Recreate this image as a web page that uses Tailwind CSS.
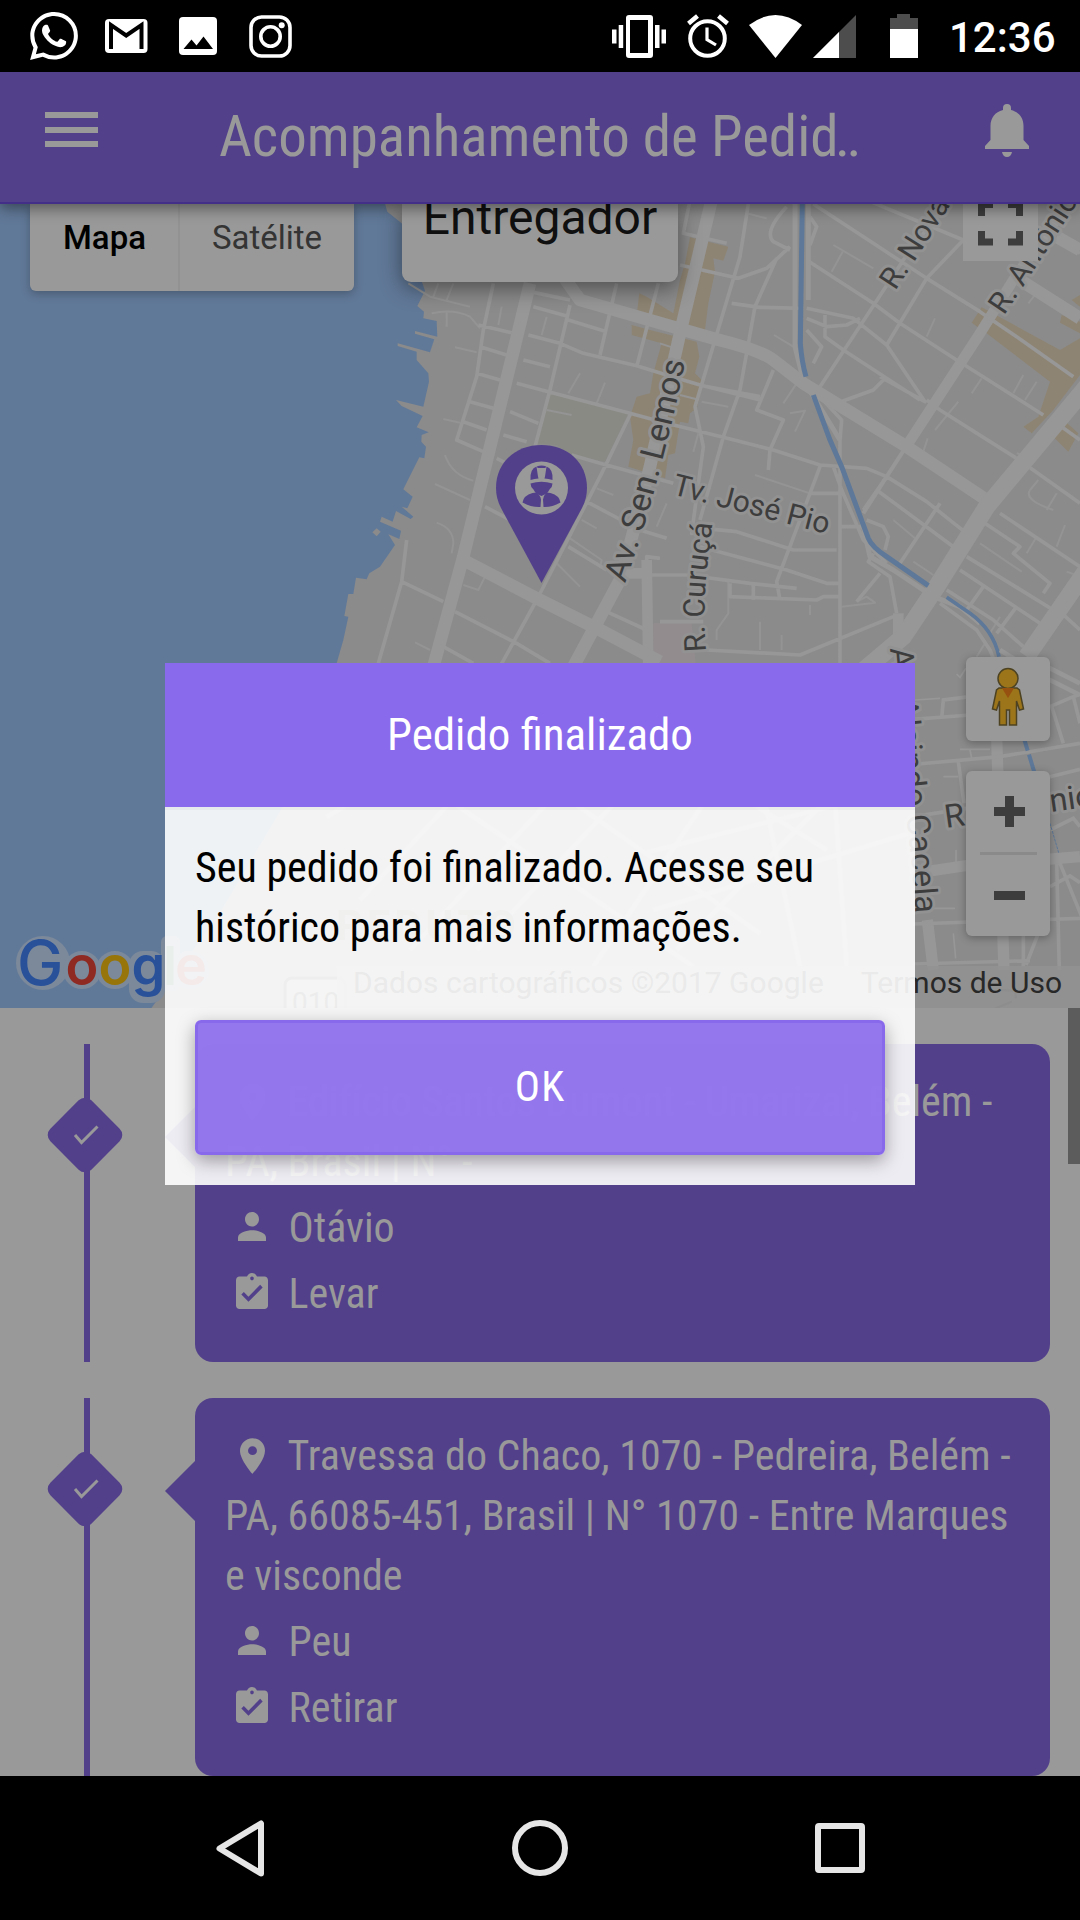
<!DOCTYPE html>
<html lang="pt-BR">
<head>
<meta charset="utf-8">
<title>Acompanhamento de Pedidos</title>
<script src="https://cdn.jsdelivr.net/npm/@tailwindcss/browser@4"></script>
</head>
<body class="bg-black">
<div class="relative flex h-[1920px] w-[1080px] flex-col overflow-hidden bg-black font-['Roboto',sans-serif]">

  <!-- Status bar -->
  <div class="flex h-[72px] shrink-0 items-center bg-black text-white">
    <svg class="ml-[30px] h-[48px] w-[48px]" viewBox="0 0 24 24" fill="currentColor"><path d="M17.472 14.382c-.297-.149-1.758-.867-2.03-.967-.273-.099-.471-.148-.67.15-.197.297-.767.966-.94 1.164-.173.199-.347.223-.644.075-.297-.15-1.255-.463-2.39-1.475-.883-.788-1.48-1.761-1.653-2.059-.173-.297-.018-.458.13-.606.134-.133.298-.347.446-.52.149-.174.198-.298.298-.497.099-.198.05-.371-.025-.52-.075-.149-.669-1.612-.916-2.207-.242-.579-.487-.5-.669-.51-.173-.008-.371-.01-.57-.01-.198 0-.52.074-.792.372-.272.297-1.04 1.016-1.04 2.479 0 1.462 1.065 2.875 1.213 3.074.149.198 2.096 3.2 5.077 4.487.709.306 1.262.489 1.694.625.712.227 1.36.195 1.871.118.571-.085 1.758-.719 2.006-1.413.248-.694.248-1.289.173-1.413-.074-.124-.272-.198-.57-.347m-5.421 7.403h-.004a9.87 9.87 0 01-5.031-1.378l-.361-.214-3.741.982.998-3.648-.235-.374a9.86 9.86 0 01-1.51-5.26c.001-5.45 4.436-9.884 9.888-9.884 2.64 0 5.122 1.03 6.988 2.898a9.825 9.825 0 012.893 6.994c-.003 5.45-4.437 9.884-9.885 9.884m8.413-18.297A11.815 11.815 0 0012.05 0C5.495 0 .16 5.335.157 11.892c0 2.096.547 4.142 1.588 5.945L.057 24l6.305-1.654a11.882 11.882 0 005.683 1.448h.005c6.554 0 11.89-5.335 11.893-11.893a11.821 11.821 0 00-3.48-8.413z"/></svg>
    <svg class="ml-[27px] h-[34px] w-[43px]" viewBox="0 0 43 34"><rect width="42.5" height="34" rx="4" fill="#fff"/><path d="M6 30V6l15.200 10.500L36.500 6v24" fill="none" stroke="#000" stroke-width="4"/></svg>
    <svg class="ml-[31px] h-[38px] w-[38px]" viewBox="0 0 38 38"><rect width="38" height="38" rx="4" fill="#fff"/><path d="M4.500 32l8-9.500 5 6 7-9L34 32z" fill="#000"/></svg>
    <svg class="ml-[31.500px] h-[43px] w-[43px]" viewBox="0 0 43 43" fill="none" stroke="#fff"><rect x="2" y="2" width="39" height="39" rx="10.500" stroke-width="3.600"/><circle cx="21.500" cy="21.500" r="9.700" stroke-width="3.600"/><circle cx="32.700" cy="10.300" r="3" fill="#fff" stroke="none"/></svg>
    <svg class="ml-auto h-[43px] w-[54px]" viewBox="0 0 54 43" fill="#fff"><path fill-rule="evenodd" d="M17 0h21q3 0 3 3v37q0 3-3 3H17q-3 0-3-3V3q0-3 3-3zm1 5v33h18V5z"/><path d="M0 14.500h4.500v14H0zM6.700 10h4.500v23H6.700zM43 10h4.500v23H43zM49.500 14.500H54v14h-4.500z"/></svg>
    <svg class="ml-[21px] h-[44px] w-[42px]" viewBox="0 0 42 44" fill="none" stroke="#fff"><circle cx="20.500" cy="24.500" r="17.300" stroke-width="4"/><path d="M20 13.500v12l9 5.500" stroke-width="3.200"/><path d="M1.500 9.500l9-7.500M40.500 9.500l-9-7.500" stroke-width="4.500"/></svg>
    <svg class="ml-[20px] h-[43px] w-[53px]" viewBox="0 0 53 43" fill="#fff"><path d="M0 10Q26.500-10 53 10L26.500 43z"/></svg>
    <svg class="ml-[11px] h-[43px] w-[43px]" viewBox="0 0 43 43"><path d="M43 0v43H0z" fill="#4d4d4d"/><path d="M26 17v26H0z" fill="#fff"/></svg>
    <svg class="ml-[34px] h-[44px] w-[28px]" viewBox="0 0 28 44"><path d="M0 4h7V0h13v4h8v11H0z" fill="#4d4d4d"/><path d="M0 15h28v29H0z" fill="#fff"/></svg>
    <span class="mr-[24px] ml-[31px] w-[107px] pt-[3px] text-[42px] leading-[74px] font-medium whitespace-nowrap">12:36</span>
  </div>

  <!-- App bar -->
  <header class="relative z-10 flex h-[132px] shrink-0 border-b-2 border-[#432f88] bg-[#53408b] text-[#999] shadow-[0_4px_14px_rgba(0,0,0,0.45)]">
    <svg class="mt-[40px] ml-[44.5px] h-[35px] w-[53px]" viewBox="0 0 53 35" fill="currentColor"><path d="M0 0h53v6H0zM0 15h53v6H0zM0 29h53v6H0z"/></svg>
    <h1 class="ml-[121.5px] flex h-[130px] w-[700px] items-center text-[57px] font-stretch-condensed whitespace-nowrap"><span>Acompanhamento de Pedi<span class="tracking-[-3.500px]">d..</span></span></h1>
    <svg class="mt-[32px] ml-[66px] h-[53px] w-[44px]" viewBox="0 0 44 53" fill="currentColor"><path d="M17 48h10q-1 5-5 5t-5-5zM0 45v-3l5.500-6V22C5.500 14 10 8 18 6V4q0-4 4-4t4 4v2c8 2 12.500 8 12.500 16v14l5.500 6v3z"/></svg>
  </header>

  <!-- Map -->
  <section class="relative h-[804px] shrink-0 overflow-hidden bg-[#617998]">
    <svg class="absolute inset-0 h-full w-full" viewBox="0 204 1080 804">
      <defs>
        <path id="lemos" d="M975 1150Q1035 985 1090 770T1166 420"/>
        <path id="curuca" d="M138 1355Q128 1230 140 1120T162 930"/>
        <path id="nova" d="M706 273L760 190L900 -30"/>
        <path id="antonio" d="M1032 347L1100 245L1290 -50"/>
        <path id="cacela" d="M890 648Q901 770 908 830T917 950"/>
      </defs>
      <g transform="translate(300 200) scale(.33333)">
        <path fill="#8b8b8b" d="M252 0L262 35L305 70L340 160L366 246L375 272L352 318L372 335L370 355L410 363L412 410L345 393L345 401L403 418L390 457L293 430L293 438L350 455L350 480L385 520L387 545L370 620L288 600L305 618L368 648L350 682L386 697L365 705L364 725L378 740L373 775L358 772L310 868L338 890L322 925L305 920L340 950L332 957L288 933L278 965L245 950L240 965L303 992L298 1017L265 1003L285 1035L240 1100L208 1120L200 1138L168 1133L160 1182L145 1182L133 1248L145 1250L130 1320L110 1390L-57 1830L-240 2139L-450 2430H2400V0z"/>
        <path fill="#8b8b8b" d="M217 997l13-12 12 10-12 14z"/>
        <path fill="#898a84" d="M745 580L985 640L915 785L820 765L770 735L712 730z"/>
        <path fill="#938c8f" d="M1060 1270H1175L1188 1400H1060z"/>
      </g>
      <g transform="translate(660 200) scale(.33333)">
        <path fill="#8e8473" d="M90 112L205 140L190 182L160 175L165 215L145 310L135 390L-70 345L-62 280L-40 290L40 340L60 240L75 190zM-85 375L-30 390L110 425L118 470L105 520L130 545L110 625L90 640L85 670L60 665L45 760L25 765L15 835L-95 800L-80 720L-90 650L-70 590L-30 580L-20 520L5 430L-85 405zM965 322L1200 450L1260 415V525L1180 630L1115 700L1090 680L1135 650L1170 545L980 400L935 368zM1205 345L1260 365V400L1200 368zM1235 300L1260 285V320zM1205 655L1255 700L1225 755L1180 710z"/>
        <g fill="none" stroke="#979797" stroke-linejoin="round">
          <!-- minor streets -->
          <g stroke-width="6" stroke="#949494">
            <path d="M-755 250L-690 290L-570 320M-665 250L-680 290M-620 250L-640 300M-685 340Q-620 325-570 350L-540 385M-640 335V380M-615 442L-550 457M-650 657L-600 668M-645 765Q-625 825-560 842M-675 852L-570 900M-670 968Q-620 985-620 1030L-625 1060M-590 1155L-545 1170L-520 1120M-735 1327L-690 1350M-340 630L-265 645M-275 580L-240 520M-190 610L-165 548M-355 405L-340 350M-485 375L-475 320M-190 865L-140 885M-270 1015L-175 1080L-180 1105M-235 960L-190 985M-240 1160L-310 1090M-10 980L20 910M0 430L45 445M60 585L110 598M125 605L205 620M100 755L115 700M285 825L450 880M260 40L320 55M342 405L400 440M370 610L410 550L435 525M405 695L435 632L390 640M520 135L640 205M548 155L515 215M800 410L825 355M935 580L965 535M1060 580L1090 525M1095 600L1130 545M825 690L895 605M790 755L803 715M1180 930Q1090 900 1110 870L1135 840M1160 930L1190 880M700 960L765 1015M760 1085L820 1125M1100 1060L1130 1010M1190 1040L1215 975M960 1030L1085 1115M300 1350V1265M365 1350V1305M170 1320V1290L205 1240V1140M450 1245V1215M545 1220L645 1208L620 1190L590 1205M1070 760L1090 765M950 1370L975 1330M1220 1115L1260 1130M1020 1250L990 1300M1105 310L1125 285"/>
          </g>
          <!-- local streets -->
          <g stroke-width="11">
            <path d="M-500 250L-530 390L-550 530L-610 720L-530 755M-760 1020L-775 1145L-845 1390M-775 1145L-650 1205M-545 375L-445 398M-540 440L-460 465M-550 520L-480 540M-570 605L-500 625M-590 665L-520 690M-390 275L-270 300M-380 320L-280 348M-395 405L-300 430L-230 460L-70 497L20 525L120 555L220 580L300 600M-410 480L-330 500M-430 550L-335 575L-90 640L20 670L190 712L340 750L480 795L620 805L680 830M-270 315L-330 570L-375 740M-275 360L-160 395M-130 250L-180 465M-5 250L-70 500M-450 635L-365 670M-470 705L-400 725M-490 775L-440 800M-265 765L-180 790L40 850M-90 645L-175 820L-370 1200L-480 1400M-525 920L-430 970M-220 905L-60 990L20 1015M-275 1040L-160 1110M-615 1235L-430 1330L-330 1390M-650 1340L-560 1390M-160 1235L-40 1290M265 12L240 170L165 420L105 620L130 740L95 1000L160 990M90 0L70 100L200 130M60 195L235 235L320 205L390 140M215 310L300 322L430 325M350 175L285 320L240 570L190 710L120 960M140 560L300 590M340 510L290 630L370 660L330 750L325 810M380 20Q310 95 340 125L390 150M450 50L470 80L450 135M440 180L640 310L720 370L890 480L1150 645M440 325L580 355L680 435L795 605L660 530M440 355L500 380L560 375L600 355M440 390L485 440L460 490M495 345V410L550 450L780 600M480 560L645 310L730 180L840 35M680 435L800 235L910 120M460 12L640 130L800 235L960 335L1070 410L1240 530M620 0L910 120M530 610L640 570L670 540M800 600L840 630L1070 775L1260 910M480 590L545 660L540 720V1400M480 800L450 880L350 1145L360 1200M450 880H540M130 985L230 995L400 1050H530M120 1040L380 1110L500 1150H540M0 1075L-40 1070L-40 1110M-40 1125H80L270 1150L410 1165M210 1150V1190L470 1200L490 1190H540M280 1150V1200M0 1265L130 1265M140 1350L420 1365L700 1250M540 980H610M520 800L545 870L610 1020L680 1090M610 930L680 830L800 905L920 1000M650 870L880 1040M620 960L670 980L685 1010L675 1050M840 910L720 1090M640 1060L625 1085L690 1130L710 1240M660 1120L590 1205M1020 940L1260 1100M960 960L1080 1040L1060 1060L1170 1150L1150 1180M920 1070L1180 1230M900 1110L1140 1270M840 1210L950 1290L990 1350L1010 1400M860 1170L1000 1260L1090 1340M970 1160L920 1230M1070 1220L1010 1300M1200 120L1260 160M1190 670L1260 720M1200 1235L1260 1290"/>
          </g>
          <path stroke-width="15" d="M405 0V440L430 540L540 720M445 0V300M605 960L630 1070L700 1110L820 1190L900 1220L960 1270"/>
          <!-- avenues -->
          <path stroke-width="32" d="M1250 -30L1060 240L960 400L735 745M-40 1080L-35 1400M-105 1120L-40 1120M620 1390L720 1330M715 1240V1330"/>
          <path stroke-width="12" d="M735 745L680 830L610 940"/>
          <path stroke-width="38" d="M-390 250L-590 1070L-680 1400M155 0L60 400L-30 800L-115 1130L-260 1400M-590 1080L-380 1190L-180 1290L0 1385M-290 230L-240 300L170 418Q300 450 340 480L430 550L740 740L980 900M1190 110L1260 150M1080 240L1260 355"/>
          <path stroke-width="52" d="M1280 560L980 920L830 1160L730 1310L600 1420M1280 1110L1100 1370"/>
          <!-- streets under the dialog -->
          <g stroke-width="14">
            <path d="M-1000 1850L-400 1500M-900 2100L-300 1450M-750 2250L-50 1500M-550 2250L200 1450M-1000 1550L100 2300M-700 1500L300 2200M-350 1420L500 1950M0 1420L600 1800M-200 2300L300 1560M50 2250L700 1600M-50 1960L750 1760M-20 2130L750 1900M250 1500L420 2300M500 1450L560 2300"/>
          </g>
        </g>
        <g fill="none" stroke="#5d7899" stroke-width="15">
          <path d="M427 0L421 430Q425 485 438 530M460 585L510 720L545 800L625 1015Q635 1040 680 1070L805 1157"/>
          <path stroke-width="11" d="M860 1192L930 1240Q1000 1290 1017 1370"/>
        </g>
      </g>
      <!-- streets around the lower right controls -->
      <g transform="translate(900 600) scale(.33333)" fill="none" stroke="#979797">
        <path stroke-width="34" d="M290 410L312 1110M82 960L100 1110M30 822L210 795M440 778L540 770"/>
        <path stroke-width="14" d="M300 150L420 225L540 285M440 200L540 250"/>
        <path stroke-width="11" d="M20 495L300 470L540 430M40 358L210 345M125 355L130 300L210 290M450 320L520 290L540 283M455 320L490 430M520 290L540 370M175 485L192 610M450 530L540 508M40 972L540 955M40 1092L390 1082M370 1000V1100M415 1000L378 1095M450 860L510 828L540 848M480 790L545 950M470 790L478 1110M40 650L200 625M450 690L520 655L540 680"/>
        <path stroke-width="5" d="M210 450L215 475M180 448H270M130 530H175M160 1000L167 1075M168 750V790M170 222L180 232L198 205M60 925H165M45 300L120 295"/>
        <path stroke="#5d7899" stroke-width="12" d="M372 415L383 452M387 464L404 520"/>
        <path stroke="#5d7899" stroke-width="3" stroke-dasharray="9 3" d="M450 670L476 758"/>
        <path stroke="#777" stroke-width="6" d="M280 1228L335 1205M300 1170L345 1172L348 1195M345 1145V1165"/>
      </g>

      <!-- labels -->
      <g fill="#3d3d3d" stroke="#929292" stroke-width="18" stroke-linejoin="round" paint-order="stroke" font-family="Roboto, sans-serif" font-size="90">
        <g transform="translate(300 200) scale(.33333)"><text font-size="99"><textPath href="#lemos" textLength="690" lengthAdjust="spacingAndGlyphs">Av. Sen. Lemos</textPath></text></g>
        <g transform="translate(660 200) scale(.33333)">
          <text transform="translate(34 882) rotate(14.400)" textLength="482" lengthAdjust="spacingAndGlyphs">Tv. José Pio</text>
          <text><textPath href="#curuca">R. Curuçá</textPath></text>
          <text><textPath href="#nova">R. Nova</textPath></text>
          <text><textPath href="#antonio">R. Antônio</textPath></text>
        </g>
      </g>
      <g fill="#3d3d3d" stroke="#929292" stroke-width="6" stroke-linejoin="round" paint-order="stroke" font-family="Roboto, sans-serif" font-size="32.500">
        <text><textPath href="#cacela">Av. Alcindo Cacela</textPath></text>
        <text transform="translate(946 828) rotate(-8)">R.</text>
        <text transform="translate(1051 812) rotate(-8)">nio</text>
      </g>
      <g fill="#6b665c" font-family="Roboto, sans-serif" font-weight="700" font-size="42">
        <text x="613" y="771" textLength="236">UMARIZAL</text>
        <text x="336" y="940" textLength="180">REDUTO</text>
      </g>
      <rect x="285" y="978" width="60" height="50" rx="7" fill="#999" stroke="#555" stroke-width="3"/>
      <text x="292" y="1012" font-family="Roboto, sans-serif" font-size="28" fill="#444">010</text>

      <!-- courier pin -->
      <path fill="#53408b" d="M541.500 583L501 508C497.500 501 496 495 496 488C496 462 516 445 541.500 445S587 462 587 488C587 495 585.500 501 582 508z"/>
      <circle cx="541.500" cy="488" r="26.500" fill="#999"/>
      <g fill="#53408b">
        <path d="M530.500 480q-.8-11 6-13.500l1.500 10 .5 2q-4 0-8 1.500zM552.500 480q.8-11-6-13.500l-1.500 10-.5 2q4 0 8 1.500zM537 466.300q4.500-1.600 9 0l-.5 1.700h-8z"/>
        <path d="M530.500 483.500q11-3.500 22 0 0 3.500-3 6-2 4.500-8 6.500-6-2-8-6.500-3-2.500-3-6z"/>
        <path d="M522.500 502.500q1-7 10-9.500l4-.5q4 3 4.500 7l-.5 7.500q-9 .5-18-4.500zM560.500 502.500q-1-7-10-9.500l-4-.5q-3 3-3.500 7l.5 7.500q8 .5 17-4.500z"/>
      </g>
    </svg>

    <!-- attribution -->
    <div class="absolute right-0 bottom-0 flex h-[42px] items-center gap-[37px] bg-[#929292]/80 pr-[18px] pb-[9px] pl-[16px] text-[30px] whitespace-nowrap text-[#282828]">
      <span>Dados cartográficos ©2017 Google</span>
      <span>Termos de Uso</span>
    </div>
    <svg class="absolute bottom-0 left-0 h-[90px] w-[220px]" viewBox="0 918 220 90" font-family="Inter, sans-serif" font-size="54" font-weight="600">
      <g fill="#7b899b" stroke="#7b899b" stroke-width="12" stroke-linejoin="round" aria-hidden="true"><circle cx="43" cy="963" r="21"/><circle cx="82" cy="970" r="13"/><circle cx="115" cy="970" r="13"/><rect x="135" y="957" width="24" height="40" rx="8"/><rect x="167" y="942" width="7" height="43"/><circle cx="190" cy="970" r="13"/></g>
      <text y="985"><tspan x="17" font-size="62" font-weight="500" fill="#28519a">G</tspan><tspan x="65.500" fill="#8f2a22">o</tspan><tspan x="98.500" fill="#97750a">o</tspan><tspan x="131.500" fill="#28519a">g</tspan><tspan x="163" fill="#1f6635">l</tspan><tspan x="175" fill="#8f2a22">e</tspan></text>
    </svg>

    <!-- map type switch -->
    <div class="absolute top-0 left-[30px] flex h-[87px] w-[324px] rounded-b-[6px] bg-[#999] text-[33px] shadow-[0_3px_10px_rgba(0,0,0,0.25)]">
      <div class="flex w-[150px] items-center justify-center border-r-2 border-[#929292] pb-[20px] pl-[1px] font-medium text-black">Mapa</div>
      <div class="flex flex-1 items-center justify-center pb-[20px] text-[#343434]">Satélite</div>
    </div>
    <div class="absolute top-0 left-[402px] flex h-[78px] w-[276px] items-center justify-center rounded-b-[9px] bg-[#999] pb-[51px] text-[48px] text-[#101010] shadow-[0_6px_22px_rgba(0,0,0,0.45)]">Entregador</div>
    <svg class="absolute top-0 left-[963px] h-[57px] w-[75px] bg-[#999]" viewBox="963 204 75 57" fill="none" stroke="#3d3d3d" stroke-width="7"><path d="M981.500 216v-11.500h11.500M1008 204.500h11.500V216M981.500 231v11h11.500M1008 242h11.500v-11"/></svg>
    <div class="absolute top-[453px] left-[966px] flex h-[84px] w-[84px] items-center justify-center rounded-[6px] bg-[#999] shadow-[0_2px_8px_rgba(0,0,0,0.3)]">
      <svg class="-mt-[4px] h-[60px] w-[34px]" viewBox="0 0 34 60" stroke="#4d4322" stroke-width="1.500" fill="#9c7419"><path d="M8 21h18l2.500 2 4 19-4 1-3-9v24h-7V43h-3v15h-7V34l-3 9-4-1 4-19z"/><circle cx="17" cy="11.500" r="10"/><path d="M11 21h12l-6 10z" fill="#96500f" stroke="none"/></svg>
    </div>
    <div class="absolute top-[567px] left-[966px] flex h-[165px] w-[84px] flex-col items-center rounded-[6px] bg-[#999] shadow-[0_2px_8px_rgba(0,0,0,0.3)]">
      <svg class="mt-[25px] ml-[2px] h-[31px] w-[31px]" viewBox="0 0 31 31" fill="#3d3d3d"><path d="M11 0h9v11h11v9H20v11h-9V20H0v-9h11z"/></svg>
      <div class="mt-[25px] h-[3px] w-[57px] bg-[#8a8a8a]"></div>
      <div class="mt-[36px] ml-[2px] h-[9px] w-[31px] bg-[#3d3d3d]"></div>
    </div>
  </section>

  <!-- Delivery timeline -->
  <main class="relative flex h-[768px] shrink-0 flex-col gap-[36px] overflow-hidden bg-[#999] pt-[36px] text-[42px] font-stretch-condensed text-[#999]">
    <div class="flex h-[318px] shrink-0">
      <div class="relative ml-[84px] w-[6px] bg-[#53408b]">
        <div class="absolute top-[62px] -left-[28px] size-[58px] rotate-45 rounded-[9px] bg-[#53408b]"></div>
        <svg class="absolute top-[80px] -left-[11px] h-[22px] w-[26px]" viewBox="0 0 26 22" fill="none" stroke="#999" stroke-width="3"><path d="M2 11l6.500 7.500L24.500 2.500"/></svg>
      </div>
      <svg class="mt-[63px] ml-[75px] h-[60px] w-[30px]" viewBox="0 0 30 60" fill="#53408b"><path d="M30 0v60L0 30z"/></svg>
      <div class="w-[855px] rounded-[18px] bg-[#53408b] px-[30px] pt-[28px] whitespace-nowrap">
        <p class="leading-[60px]"><span class="inline-block w-[62.500px] pl-[14.500px] align-middle"><svg class="mb-[6px] h-[36px] w-[25px]" viewBox="5 2 14 20" fill="currentColor"><path d="M12 2C8.130 2 5 5.130 5 9c0 5.250 7 13 7 13s7-7.750 7-13c0-3.870-3.130-7-7-7zm0 9.500a2.500 2.500 0 110-5 2.500 2.500 0 010 5z"/></svg></span>Edifício Santos Dumont - Umarizal, Belém -<br>PA, Brasil | N° -</p>
        <div class="mt-[2px] flex h-[66px] items-center"><svg class="mr-[22.500px] mb-[2px] ml-[13px] h-[29px] w-[28px]" viewBox="4 4 16 16" preserveAspectRatio="none" fill="currentColor"><path d="M12 12c2.210 0 4-1.790 4-4s-1.790-4-4-4-4 1.790-4 4 1.790 4 4 4zm0 2c-2.670 0-8 1.340-8 4v2h16v-2c0-2.660-5.330-4-8-4z"/></svg>Otávio</div>
        <div class="flex h-[66px] items-center"><svg class="mr-[20.500px] mb-[4px] ml-[11px] h-[36px] w-[32px]" viewBox="3 1 18 20" preserveAspectRatio="none" fill="currentColor"><path d="M19 3h-4.180C14.400 1.840 13.300 1 12 1s-2.400.84-2.820 2H5c-1.100 0-2 .9-2 2v14c0 1.100.9 2 2 2h14c1.100 0 2-.9 2-2V5c0-1.100-.9-2-2-2zm-7 0c.55 0 1 .45 1 1s-.45 1-1 1-1-.45-1-1 .45-1 1-1zm-2 14l-4-4 1.410-1.410L10 14.170l6.590-6.590L18 9l-8 8z"/></svg>Levar</div>
      </div>
    </div>
    <div class="flex h-[378px] shrink-0">
      <div class="relative ml-[84px] w-[6px] bg-[#53408b]">
        <div class="absolute top-[62px] -left-[28px] size-[58px] rotate-45 rounded-[9px] bg-[#53408b]"></div>
        <svg class="absolute top-[80px] -left-[11px] h-[22px] w-[26px]" viewBox="0 0 26 22" fill="none" stroke="#999" stroke-width="3"><path d="M2 11l6.500 7.500L24.500 2.500"/></svg>
      </div>
      <svg class="mt-[63px] ml-[75px] h-[60px] w-[30px]" viewBox="0 0 30 60" fill="#53408b"><path d="M30 0v60L0 30z"/></svg>
      <div class="w-[855px] rounded-[18px] bg-[#53408b] px-[30px] pt-[28px] whitespace-nowrap">
        <p class="leading-[60px]"><span class="inline-block w-[62.500px] pl-[14.500px] align-middle"><svg class="mb-[6px] h-[36px] w-[25px]" viewBox="5 2 14 20" fill="currentColor"><path d="M12 2C8.130 2 5 5.130 5 9c0 5.250 7 13 7 13s7-7.750 7-13c0-3.870-3.130-7-7-7zm0 9.500a2.500 2.500 0 110-5 2.500 2.500 0 010 5z"/></svg></span>Travessa do Chaco, 1070 - Pedreira, Belém -<br>PA, 66085-451, Brasil | N° 1070 - Entre Marques<br>e visconde</p>
        <div class="mt-[2px] flex h-[66px] items-center"><svg class="mr-[22.500px] mb-[2px] ml-[13px] h-[29px] w-[28px]" viewBox="4 4 16 16" preserveAspectRatio="none" fill="currentColor"><path d="M12 12c2.210 0 4-1.790 4-4s-1.790-4-4-4-4 1.790-4 4 1.790 4 4 4zm0 2c-2.670 0-8 1.340-8 4v2h16v-2c0-2.660-5.330-4-8-4z"/></svg>Peu</div>
        <div class="flex h-[66px] items-center"><svg class="mr-[20.500px] mb-[4px] ml-[11px] h-[36px] w-[32px]" viewBox="3 1 18 20" preserveAspectRatio="none" fill="currentColor"><path d="M19 3h-4.180C14.400 1.840 13.300 1 12 1s-2.400.84-2.820 2H5c-1.100 0-2 .9-2 2v14c0 1.100.9 2 2 2h14c1.100 0 2-.9 2-2V5c0-1.100-.9-2-2-2zm-7 0c.55 0 1 .45 1 1s-.45 1-1 1-1-.45-1-1 .45-1 1-1zm-2 14l-4-4 1.410-1.410L10 14.170l6.590-6.590L18 9l-8 8z"/></svg>Retirar</div>
      </div>
    </div>
    <div class="absolute top-0 right-0 h-[156px] w-[12px] bg-[#5c5c5c]"></div>
  </main>

  <!-- Navigation bar -->
  <nav class="flex h-[144px] shrink-0 items-center bg-black">
    <svg class="ml-[216px] h-[57px] w-[48px]" viewBox="0 0 48 57" fill="none" stroke="#e6e6e6" stroke-width="6" stroke-linejoin="round"><path d="M45 3.500v50L3.500 28.500z"/></svg>
    <div class="ml-[248px] size-[56px] rounded-full border-6 border-[#e6e6e6]"></div>
    <div class="ml-[247px] size-[50px] rounded-[4px] border-6 border-[#e6e6e6]"></div>
  </nav>

  <!-- Dialog -->
  <div class="absolute top-[663px] left-[165px] z-20 flex h-[522px] w-[750px] flex-col bg-white/90 font-stretch-condensed" role="dialog">
    <div class="flex h-[144px] items-center justify-center bg-[#8665eb]/97 pb-[1px] text-[45px] text-white">Pedido finalizado</div>
    <div class="h-[3px] bg-black/3"></div>
    <p class="px-[30px] pt-[28px] text-[42px] leading-[60px] whitespace-nowrap text-black">Seu pedido foi finalizado. Acesse seu<br>histórico para mais informações.</p>
    <button class="mx-[30px] mt-auto mb-[30px] h-[135px] rounded-[6px] border-3 border-[#8969eb] bg-[#8969eb]/90 pb-[3px] text-[42px] tracking-[1.200px] text-white shadow-[0_6px_18px_rgba(0,0,0,0.35)]">OK</button>
  </div>
</div>
</body>
</html>
